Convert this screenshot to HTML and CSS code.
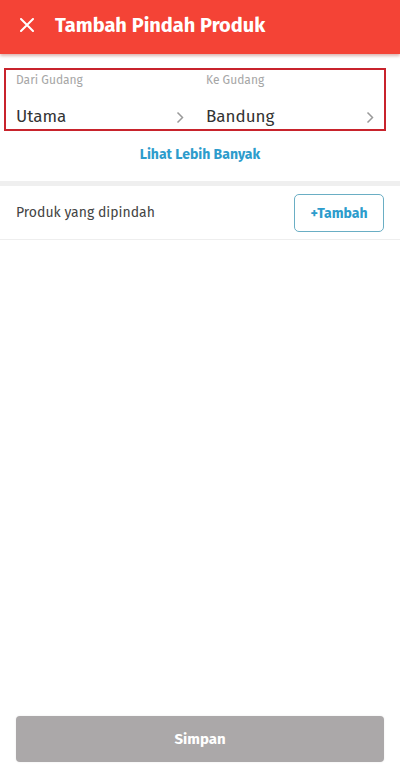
FILE: index.html
```html
<!DOCTYPE html>
<html lang="id">
<head>
  <meta charset="UTF-8">
  <title>Tambah Pindah Produk</title>
  <link rel="stylesheet" href="styles.css">
</head>
<body>
  <div class="page">
    <div class="header">
      <svg class="close" width="14" height="14" viewBox="0 0 14 14">
        <path d="M1 1L13 13M13 1L1 13" stroke="#fff" stroke-width="2" stroke-linecap="round"/>
      </svg>
      <h1>Tambah Pindah Produk</h1>
    </div>

    <div class="gudang">
      <div class="gudang-col">
        <div class="label">Dari Gudang</div>
        <div class="value-row">
          <span class="value">Utama</span>
          <svg class="chev" width="8" height="13" viewBox="0 0 8 13"><path d="M1.5 1.5L6.5 6.5L1.5 11.5" fill="none" stroke="#9a9a9a" stroke-width="1.5"/></svg>
        </div>
      </div>
      <div class="gudang-col">
        <div class="label">Ke Gudang</div>
        <div class="value-row">
          <span class="value">Bandung</span>
          <svg class="chev" width="8" height="13" viewBox="0 0 8 13"><path d="M1.5 1.5L6.5 6.5L1.5 11.5" fill="none" stroke="#9a9a9a" stroke-width="1.5"/></svg>
        </div>
      </div>
    </div>

    <div class="more">Lihat Lebih Banyak</div>

    <div class="band"></div>

    <div class="produk-row">
      <span class="produk-title">Produk yang dipindah</span>
      <button class="btn-tambah">+Tambah</button>
    </div>

    <div class="spacer"></div>

    <div class="footer">
      <button class="btn-simpan">Simpan</button>
    </div>
  </div>
</body>
</html>
```

FILE: styles.css
```css
html, body {
  margin: 0;
  padding: 0;
}

body {
  font-family: "Fira Sans", Lato, "Noto Sans", sans-serif;
  background: #fff;
  color: #333;
}

.page {
  height: 773px;
  display: flex;
  flex-direction: column;
}

.header {
  height: 54px;
  flex-shrink: 0;
  background: #f44336;
  display: flex;
  align-items: center;
  padding-left: 20px;
  box-shadow: 0 2px 3px rgba(150, 40, 30, 0.35);
}

.close {
  margin-right: 21px;
  margin-bottom: 4px;
}

.header h1 {
  margin: 0;
  color: #fff;
  font-size: 20px;
  font-weight: 700;
  margin-bottom: 4px;
}

.gudang {
  margin: 14px 14px 0 4px;
  height: 59px;
  border: 2px solid #c8232c;
  display: flex;
}

.gudang-col {
  flex: 1;
  padding: 3px 8px 0 10px;
}

.gudang-col + .gudang-col {
  padding-left: 12px;
}

.label {
  font-size: 12px;
  color: #a6a6a6;
  height: 33px;
}

.value-row {
  display: flex;
  align-items: center;
  justify-content: space-between;
}

.value {
  font-size: 17px;
  color: #333;
}

.chev {
  margin-top: 1px;
  margin-right: 2px;
}

.more {
  text-align: center;
  color: #2d9ccc;
  font-weight: 700;
  font-size: 14px;
  margin-top: 15px;
  height: 35px;
}

.band {
  height: 5px;
  flex-shrink: 0;
  background: #efefef;
}

.produk-row {
  height: 53px;
  flex-shrink: 0;
  display: flex;
  align-items: center;
  justify-content: space-between;
  padding: 0 16px;
  border-bottom: 1px solid #eee;
}

.produk-title {
  font-size: 14px;
  color: #444;
}

.btn-tambah {
  width: 90px;
  height: 38px;
  border: 1.5px solid #6aaec4;
  border-radius: 5px;
  background: #fff;
  color: #2d9ccc;
  font-family: inherit;
  font-weight: 700;
  font-size: 14px;
  margin-top: 1px;
}

.spacer {
  flex: 1;
}

.footer {
  padding: 0 16px 11px;
}

.btn-simpan {
  width: 100%;
  height: 46px;
  border: none;
  border-radius: 4px;
  background: #aba8a9;
  color: #fff;
  font-family: inherit;
  font-weight: 700;
  font-size: 15px;
  box-shadow: 0 0 2px rgba(0, 0, 0, 0.1);
}
```
